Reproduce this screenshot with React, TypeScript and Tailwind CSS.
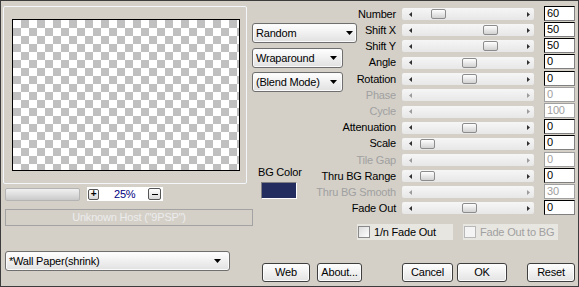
import React from 'react';

type Slider = { label: string; value: string; thumb?: string; h: string; off?: boolean };

const sliders: Slider[] = [
  { label: 'Number', value: '60', thumb: 'left-[29px]', h: 'h-4' },
  { label: 'Shift X', value: '50', thumb: 'left-[81px]', h: 'h-4' },
  { label: 'Shift Y', value: '50', thumb: 'left-[81px]', h: 'h-4' },
  { label: 'Angle', value: '0', thumb: 'left-[60px]', h: 'h-[17px]' },
  { label: 'Rotation', value: '0', thumb: 'left-[60px]', h: 'h-4' },
  { label: 'Phase', value: '0', off: true, h: 'h-4' },
  { label: 'Cycle', value: '100', off: true, h: 'h-[17px]' },
  { label: 'Attenuation', value: '0', thumb: 'left-[60px]', h: 'h-[15px]' },
  { label: 'Scale', value: '0', thumb: 'left-[18px]', h: 'h-[17px]' },
  { label: 'Tile Gap', value: '0', off: true, h: 'h-4' },
  { label: 'Thru BG Range', value: '0', thumb: 'left-[18px]', h: 'h-4' },
  { label: 'Thru BG Smooth', value: '30', off: true, h: 'h-4' },
  { label: 'Fade Out', value: '0', thumb: 'left-[60px]', h: 'h-4' },
];

function Tri({ dir, off }: { dir: 'l' | 'r'; off?: boolean }) {
  return (
    <svg width="3" height="5" viewBox="0 0 3 5" className="shrink-0">
      <path d={dir === 'l' ? 'M3 0V5L0 2.5Z' : 'M0 0V5L3 2.5Z'} fill={off ? '#9c9c9c' : '#303030'} />
    </svg>
  );
}

function DownArrow() {
  return (
    <svg width="7" height="4" viewBox="0 0 7 4" className="shrink-0">
      <path d="M0 0H7L3.5 4Z" fill="#000" />
    </svg>
  );
}

function Dropdown({ label, w, pr }: { label: string; w: string; pr: string }) {
  return (
    <div
      className={`${w} ${pr} h-[20px] rounded-[3px] border border-[#6f6f6f] bg-linear-to-b from-white to-[#e1e1e1] shadow-[inset_0_0_0_1px_#fafafa] flex items-center justify-between pl-[3px]`}>
      <span>{label}</span>
      <DownArrow />
    </div>
  );
}

function Button({ label, w, ml }: { label: string; w: string; ml: string }) {
  return (
    <div
      className={`${w} ${ml} h-[19px] rounded-[3px] border border-[#3f3f3f] bg-linear-to-b from-white to-[#e3e3e3] shadow-[inset_0_0_0_1px_#fdfdfd] flex items-center justify-center`}>
      {label}
    </div>
  );
}

function SliderRow({ s }: { s: Slider }) {
  return (
    <div className={`${s.h} flex items-center`}>
      <div className={`w-[39px] flex justify-end whitespace-nowrap ${s.off ? 'text-[#a0a0a0]' : ''}`}>
        <span>{s.label}</span>
      </div>
      <div className="relative ml-[6px] w-[132px] h-3 rounded-[2px] bg-linear-to-b from-[#f6f6f6] to-[#e7e7e7] flex items-center justify-between pl-[7px] pr-[4px]">
        <Tri dir="l" off={s.off} />
        <Tri dir="r" off={s.off} />
        {s.thumb && (
          <div
            className={`absolute ${s.thumb} top-[1px] w-[15px] h-[10px] rounded-[2px] border border-[#8c8c8c] bg-linear-to-b from-white to-[#d2d2d2]`}
          />
        )}
      </div>
      <div
        className={`ml-[10px] -mt-[2px] w-[31px] h-[15px] pl-[2px] bg-white flex items-center border ${
          s.off ? 'border-[#a0a0a0] text-[#a0a0a0]' : 'border-[#808080] border-l-black border-t-black'
        }`}>
        {s.value}
      </div>
    </div>
  );
}

export default function App() {
  return (
    <div className="w-[579px] h-[287px] bg-[#d4d0c8] border border-[#3c3c3c] flex overflow-hidden text-[11px] leading-[13px] tracking-[-0.2px] text-black font-['Liberation_Sans',Arial,sans-serif]">
      {/* preview side */}
      <div className="w-[251px] shrink-0 flex flex-col">
        <div className="ml-[2px] mt-[5px] w-[244px] h-[178px] border border-[#f3f7fb] rounded-[2px] pt-[12px] pl-[8px]">
          <div className="w-[228px] h-[152px] border border-black bg-[conic-gradient(#c0c0c0_25%,#fff_0_50%,#c0c0c0_0_75%,#fff_0)] bg-[length:16px_16px]" />
        </div>
        <div className="mt-[3px] ml-[4px] flex items-center h-[14px]">
          <div className="w-[75px] h-[13px] rounded-[2px] border border-[#b4b4b4] bg-linear-to-b from-[#f0f0f0] via-[#dedede] to-[#c9c9c9]" />
          <div className="ml-[7px] w-[76px] h-[14px] bg-white flex items-center">
            <div className="ml-[1px] w-[11px] h-[11px] rounded-[2px] border border-[#555] bg-linear-to-b from-white to-[#d8d8d8] flex items-center justify-center text-[10px] leading-none font-bold">
              +
            </div>
            <span className="ml-[15px] w-[22px] text-[#000080]">25%</span>
            <div className="ml-[12px] w-[13px] h-[12px] rounded-[2px] border border-[#555] bg-linear-to-b from-white to-[#d8d8d8] flex items-center justify-center">
              <div className="w-[6px] h-px bg-black" />
            </div>
          </div>
        </div>
        <div className="mt-[8px] ml-[4px] w-[248px] h-[17px] shrink-0 border border-[#a3a3a3] flex items-center justify-center text-[#ececec]">
          Unknown Host ("9PSP")
        </div>
        <div className="mt-[25px] ml-[4px]">
          <Dropdown label="*Wall Paper(shrink)" w="w-[225px]" pr="pr-[8px]" />
        </div>
      </div>

      {/* controls side */}
      <div className="flex-1 flex flex-col">
        <div className="flex h-[215px]">
          <div className="w-[105px] shrink-0 flex flex-col">
            <div className="mt-[22px]">
              <Dropdown label="Random" w="w-[105px]" pr="pr-[3px]" />
            </div>
            <div className="mt-[5px]">
              <Dropdown label="Wraparound" w="w-[91px]" pr="pr-[5px]" />
            </div>
            <div className="mt-[4px]">
              <Dropdown label="(Blend Mode)" w="w-[91px]" pr="pr-[5px]" />
            </div>
            <div className="mt-[74px] ml-[6px]">BG Color</div>
            <div className="mt-[3px] ml-[9px] w-[36px] h-[17px] border border-[#808080] border-r-white border-b-white bg-[#232d5e]" />
          </div>
          <div className="flex flex-col pt-[5px]">
            {sliders.map((s) => (
              <SliderRow key={s.label} s={s} />
            ))}
          </div>
        </div>

        <div className="mt-[8px] h-[16px] flex pl-[105px]">
          <div className="w-[96px] h-[16px] bg-[#e8e6e1] flex items-center">
            <div className="ml-[1px] w-[12px] h-[12px] border border-[#8a8a8a] bg-linear-to-br from-[#dcdcdc] to-white" />
            <span className="ml-[4px]">1/n Fade Out</span>
          </div>
          <div className="ml-[10px] w-[95px] h-[16px] bg-[#e8e6e1] flex items-center text-[#a0a0a0]">
            <div className="ml-[1px] w-[12px] h-[12px] border border-[#b8b8b8] bg-[#f4f4f4]" />
            <span className="ml-[4px]">Fade Out to BG</span>
          </div>
        </div>

        <div className="mt-[23px] flex">
          <Button label="Web" w="w-[48px]" ml="ml-[10px]" />
          <Button label="About..." w="w-[45px]" ml="ml-[7px]" />
          <Button label="Cancel" w="w-[51px]" ml="ml-[40px]" />
          <Button label="OK" w="w-[50px]" ml="ml-[4px]" />
          <Button label="Reset" w="w-[48px]" ml="ml-[20px]" />
        </div>
      </div>
    </div>
  );
}
